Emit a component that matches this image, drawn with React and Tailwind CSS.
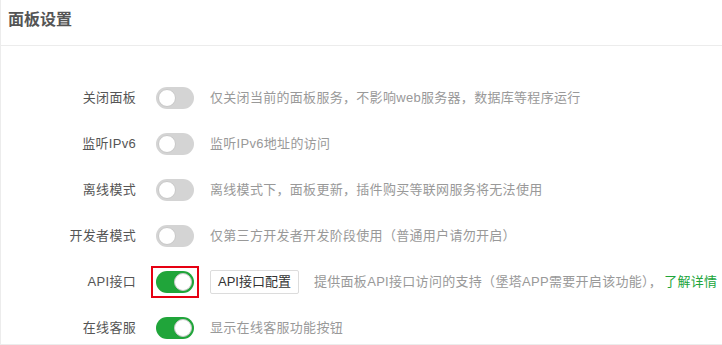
import React from 'react';

const rows = [
  { label: '关闭面板', on: false, desc: '仅关闭当前的面板服务，不影响web服务器，数据库等程序运行' },
  { label: '监听IPv6', on: false, desc: '监听IPv6地址的访问' },
  { label: '离线模式', on: false, desc: '离线模式下，面板更新，插件购买等联网服务将无法使用' },
  { label: '开发者模式', on: false, desc: '仅第三方开发者开发阶段使用（普通用户请勿开启）' },
  { label: 'API接口', on: true, api: true, desc: '提供面板API接口访问的支持（堡塔APP需要开启该功能），' },
  { label: '在线客服', on: true, desc: '显示在线客服功能按钮' },
];

function Toggle({ on }) {
  return (
    <div className={'relative w-[38px] h-[22px] rounded-full ' + (on ? 'bg-[#20a53a]' : 'bg-[#d4d4d4]')}>
      <span
        className={
          'absolute top-[2px] w-[18px] h-[18px] rounded-full bg-white border border-[#c8c8c8] ' +
          (on ? 'right-[2px]' : 'left-[2px]')
        }
      />
    </div>
  );
}

export default function App() {
  return (
    <div
      className="w-[722px] h-[345px] bg-white border-l border-b border-[#ececec] overflow-hidden"
      style={{ fontFamily: '"Liberation Sans", "Noto Sans CJK SC", sans-serif' }}
    >
      <div className="h-[46px] border-b border-[#ececec] pl-[7px] pt-[10px]">
        <h2 className="text-[16px] font-bold text-[#555] leading-5">面板设置</h2>
      </div>
      <div className="pt-[29px]">
        {rows.map((r) => (
          <div key={r.label} className="flex items-center h-[46px] text-[13px]">
            <div className="w-[135px] text-right text-[#555] tracking-[0.3px]">{r.label}</div>
            <div
              className={
                'ml-[20px] shrink-0 ' + (r.api ? 'outline-2 outline-[#e60012] outline-offset-[3px]' : '')
              }
            >
              <Toggle on={r.on} />
            </div>
            {r.api && (
              <button className="ml-[16px] h-[24px] px-[7px] border border-[#dcdcdc] rounded-[2px] bg-white text-[#333] text-[13px]">
                API接口配置
              </button>
            )}
            <div className={(r.api ? 'ml-[15px]' : 'ml-[16px]') + ' text-[#999] whitespace-nowrap tracking-[0.3px]'}>
              {r.desc}
              {r.api && <span className="ml-[2px] text-[#20a53a]">了解详情</span>}
            </div>
          </div>
        ))}
      </div>
    </div>
  );
}
